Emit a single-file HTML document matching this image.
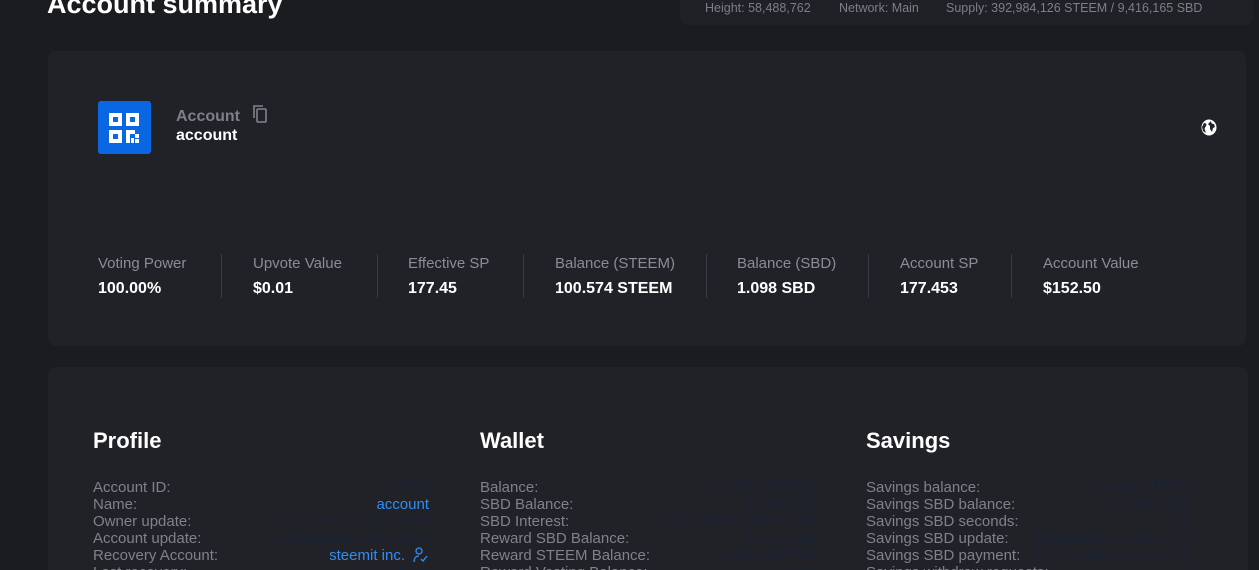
<!DOCTYPE html>
<html><head><style>
*{margin:0;padding:0;box-sizing:border-box}
html,body{width:1259px;height:570px;overflow:hidden}
body{background:#1b1c20;font-family:"Liberation Sans",sans-serif;position:relative;color:#fff}
.a{position:absolute;white-space:nowrap}
.card{position:absolute;background:#212227;border-radius:8px}
.lbl{color:#8a8d96;font-size:15px}
.val{font-weight:bold;font-size:16px;color:#fff}
.div{position:absolute;width:1px;height:44px;top:254px;background:#3a3c44}
.row{position:absolute;font-size:15px;line-height:17px;color:#7f828b}
.row span{position:absolute;right:0;top:0;color:#1b2536}
.h{font-size:22px;font-weight:bold;color:#fff}
</style></head><body>
<div class="a" style="left:47px;top:-11px;font-size:27px;font-weight:bold;color:#fff">Account summary</div>
<div class="card" style="left:680px;top:-10px;width:573px;height:35px;background:#202126"></div>
<div class="a" style="left:705px;top:1px;font-size:12.5px;color:#7c7f88">Height: 58,488,762</div>
<div class="a" style="left:839px;top:1px;font-size:12.5px;color:#7c7f88">Network: Main</div>
<div class="a" style="left:946px;top:1px;font-size:12.5px;color:#7c7f88">Supply: 392,984,126 STEEM / 9,416,165 SBD</div>

<div class="card" style="left:48px;top:51px;width:1198px;height:295px"></div>
<div class="a" style="left:98px;top:101px;width:53px;height:53px;background:#0a67e3;border-radius:3px">
<svg width="53" height="53" viewBox="0 0 53 53"><g fill="#fff">
<path d="M11 12h13v13H11zM15 16v5h5v-5zM28 12h13v13H28zM32 16v5h5v-5zM11 29h13v13H11zM15 33v5h5v-5z" fill-rule="evenodd"/>
<rect x="28" y="29" width="4" height="13"/><rect x="32" y="29" width="5" height="4"/><rect x="37" y="33" width="4" height="4"/><rect x="33" y="37" width="3" height="5"/><rect x="37" y="38" width="4" height="4"/></g></svg></div>
<div class="a" style="left:176px;top:108px;font-size:16px;font-weight:bold;color:#7d808a">Account</div>
<div class="a" style="left:176px;top:127px;font-size:16px;font-weight:bold;color:#fff">account</div>
<svg class="a" style="left:252px;top:104px" width="18" height="20" viewBox="0 0 18 20" fill="none" stroke="#80838c" stroke-width="1.6"><path d="M2 14V2h9"/><rect x="5" y="5" width="9" height="13" rx="1"/></svg>
<svg class="a" style="left:1201px;top:119px" width="16" height="17" viewBox="0 0 16 17"><ellipse cx="8" cy="8.5" rx="7.5" ry="8" fill="#fff"/><path d="M3 4c2 0 3 1 2 3s-2 2-1 4l1 3-3-2-1-4zM10 2c0 2 1 3 3 3l1 3-2 1-1 4-2-3 0-3-2-2z" fill="#212227"/></svg>

<div class="a lbl" style="left:98px;top:255px">Voting Power</div><div class="a val" style="left:98px;top:280px">100.00%</div>
<div class="div" style="left:221px"></div>
<div class="a lbl" style="left:253px;top:255px">Upvote Value</div><div class="a val" style="left:253px;top:280px">$0.01</div>
<div class="div" style="left:377px"></div>
<div class="a lbl" style="left:408px;top:255px">Effective SP</div><div class="a val" style="left:408px;top:280px">177.45</div>
<div class="div" style="left:523px"></div>
<div class="a lbl" style="left:555px;top:255px">Balance (STEEM)</div><div class="a val" style="left:555px;top:280px">100.574 STEEM</div>
<div class="div" style="left:706px"></div>
<div class="a lbl" style="left:737px;top:255px">Balance (SBD)</div><div class="a val" style="left:737px;top:280px">1.098 SBD</div>
<div class="div" style="left:868px"></div>
<div class="a lbl" style="left:900px;top:255px">Account SP</div><div class="a val" style="left:900px;top:280px">177.453</div>
<div class="div" style="left:1011px"></div>
<div class="a lbl" style="left:1043px;top:255px">Account Value</div><div class="a val" style="left:1043px;top:280px">$152.50</div>

<div class="card" style="left:48px;top:367px;width:1200px;height:213px"></div>
<div class="a h" style="left:93px;top:428px">Profile</div>
<div class="a h" style="left:480px;top:428px">Wallet</div>
<div class="a h" style="left:866px;top:428px">Savings</div>

<div class="row" style="left:93px;top:479px;width:336px">Account ID:<span>7589</span></div>
<div class="row" style="left:93px;top:496px;width:336px">Name:<span style="color:#2f8ef5">account</span></div>
<div class="row" style="left:93px;top:513px;width:336px">Owner update:<span>12/31/1969 4:00:00 PM</span></div>
<div class="row" style="left:93px;top:530px;width:336px">Account update:<span>12/31/1969 4:00:00 PM</span></div>
<div class="row" style="left:93px;top:547px;width:336px">Recovery Account:<span style="color:#2f8ef5;right:24px">steemit inc.</span></div>
<svg class="a" style="left:412px;top:546px" width="18" height="18" viewBox="0 0 18 18" fill="none" stroke="#2f8ef5" stroke-width="1.3"><circle cx="7" cy="5" r="3"/><path d="M2 16c0-4 2-6 5-6M9 13l2 2 4-5"/></svg>
<div class="row" style="left:93px;top:564px;width:336px">Last recovery:<span>12/31/1969</span></div>

<div class="row" style="left:480px;top:479px;width:336px">Balance:<span>100.574 STEEM</span></div>
<div class="row" style="left:480px;top:496px;width:336px">SBD Balance:<span>1.098 SBD</span></div>
<div class="row" style="left:480px;top:513px;width:336px">SBD Interest:<span>06/01/2018 4:25:06 AM</span></div>
<div class="row" style="left:480px;top:530px;width:336px">Reward SBD Balance:<span>0.000 SBD</span></div>
<div class="row" style="left:480px;top:547px;width:336px">Reward STEEM Balance:<span>0.000 STEEM</span></div>
<div class="row" style="left:480px;top:564px;width:336px">Reward Vesting Balance:<span>0.00</span></div>

<div class="row" style="left:866px;top:479px;width:324px">Savings balance:<span>0.000 STEEM</span></div>
<div class="row" style="left:866px;top:496px;width:324px">Savings SBD balance:<span>0.000 SBD</span></div>
<div class="row" style="left:866px;top:513px;width:324px">Savings SBD seconds:<span>0</span></div>
<div class="row" style="left:866px;top:530px;width:324px">Savings SBD update:<span>12/31/1969 4:00:00 PM</span></div>
<div class="row" style="left:866px;top:547px;width:324px">Savings SBD payment:<span>12/31/1969 4:00:00 PM</span></div>
<div class="row" style="left:866px;top:564px;width:324px">Savings withdraw requests:<span>0</span></div>
</body></html>
